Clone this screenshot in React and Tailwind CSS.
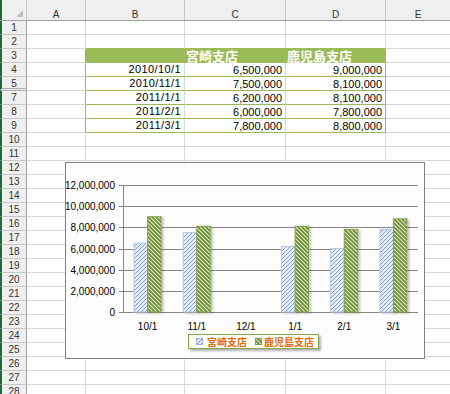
import React from 'react'

const rowNums = [1, 2, 3, 4, 5, 7, 8, 9, 10, 11, 12, 13, 14, 15, 16, 17, 18, 19, 20, 21, 22, 23, 24, 25, 26, 27, 28]

const table = {
  3: ['', '宮崎支店', '鹿児島支店'],
  4: ['2010/10/1', '6,500,000', '9,000,000'],
  5: ['2010/11/1', '7,500,000', '8,100,000'],
  7: ['2011/1/1', '6,200,000', '8,100,000'],
  8: ['2011/2/1', '6,000,000', '7,800,000'],
  9: ['2011/3/1', '7,800,000', '8,800,000'],
}

const cats = ['10/1', '11/1', '12/1', '1/1', '2/1', '3/1']
const miyazaki = [6.5, 7.5, null, 6.2, 6.0, 7.8]
const kagoshima = [9.0, 8.1, null, 8.1, 7.8, 8.8]

const jp = "'Noto Sans CJK JP', sans-serif"

function Chart() {
  const x0 = 57
  const catW = 295 / 6
  const y0 = 149
  const unit = 127 / 12
  const barW = 13.5
  const ticks = [0, 2, 4, 6, 8, 10, 12]

  return (
    <div className="absolute left-[65px] top-[162px] w-[360px] h-[197px] border border-[#7f7f7f] bg-[#fdfdfd]">
      <svg width="358" height="195" className="block" fontFamily="'Liberation Sans', Arial, sans-serif">
        <defs>
          <pattern id="pb" width="4" height="4" patternUnits="userSpaceOnUse">
            <rect width="4" height="4" fill="#e8effa" />
            <path d="M-1,1 l2,-2 M0,4 l4,-4 M3,5 l2,-2" stroke="#6f9bd8" strokeWidth="1" />
          </pattern>
          <pattern id="pg" width="4" height="4" patternUnits="userSpaceOnUse">
            <rect width="4" height="4" fill="#e3ecce" />
            <path d="M-1,3 l2,2 M0,0 l4,4 M3,-1 l2,2" stroke="#6a8a2e" strokeWidth="1.6" />
          </pattern>
          <filter id="sh" x="-30%" y="-10%" width="160%" height="130%">
            <feDropShadow dx="2" dy="1" stdDeviation="1" floodColor="#000" floodOpacity="0.22" />
          </filter>
          <filter id="lsh" x="-10%" y="-30%" width="120%" height="190%">
            <feDropShadow dx="2" dy="2" stdDeviation="1.2" floodColor="#000" floodOpacity="0.3" />
          </filter>
        </defs>

        {ticks.map((t) => {
          const y = Math.round(y0 - t * unit)
          return (
            <g key={t}>
              <line x1="53" x2="352" y1={y + 0.5} y2={y + 0.5} stroke="#868686" strokeWidth="1" />
              <text x="49" y={y + 4} fontSize="10" textAnchor="end" fill="#000">
                {t === 0 ? '0' : `${t},000,000`}
              </text>
            </g>
          )
        })}
        <line x1={x0 + 0.5} x2={x0 + 0.5} y1="22" y2={y0 + 1} stroke="#868686" strokeWidth="1" />

        {cats.map((c, i) => {
          const cx = x0 + catW * (i + 0.5)
          return (
            <g key={c}>
              {miyazaki[i] != null && (
                <rect x={cx - barW} y={y0 - miyazaki[i] * unit} width={barW} height={miyazaki[i] * unit} fill="url(#pb)" stroke="#b3c9e8" strokeWidth="1" filter="url(#sh)" />
              )}
              {kagoshima[i] != null && (
                <rect x={cx} y={y0 - kagoshima[i] * unit} width={barW} height={kagoshima[i] * unit} fill="url(#pg)" stroke="#86a44a" strokeWidth="1" filter="url(#sh)" />
              )}
              <text x={cx} y="167" fontSize="10" textAnchor="middle" fill="#000">{c}</text>
            </g>
          )
        })}

        <rect x="122.5" y="171.5" width="130" height="14" fill="#fafcf5" stroke="#86a44a" strokeWidth="1" filter="url(#lsh)" />
        <rect x="130.5" y="175.5" width="6" height="6" fill="url(#pb)" stroke="#9fb8de" strokeWidth="1" />
        <text x="141" y="182.5" fontSize="10" fontWeight="bold" fill="#e46c0a" fontFamily={jp}>宮崎支店</text>
        <rect x="189.5" y="175.5" width="6" height="6" fill="url(#pg)" stroke="#7d9a42" strokeWidth="1" />
        <text x="198" y="182.5" fontSize="10" fontWeight="bold" fill="#e46c0a" fontFamily={jp}>鹿児島支店</text>
      </svg>
    </div>
  )
}

export default function App() {
  return (
    <div className="relative w-[450px] h-[394px] overflow-hidden bg-white font-['Liberation_Sans',Arial,sans-serif] text-black">
      {/* column headers */}
      <div className="flex h-[21px] bg-[#efefef] border-b border-[#9e9e9e] text-[10px] text-[#333]">
        <div className="relative w-[27px] border-l-2 border-l-[#1e6b3d] border-r border-r-[#c6c6c6]">
          <div className="absolute right-[3px] bottom-[3px] w-0 h-0 border-l-[7px] border-l-transparent border-b-[7px] border-b-[#c0c0c0]" />
        </div>
        <div className="w-[59px] border-r border-[#c6c6c6] pt-[7px] text-center">A</div>
        <div className="w-[99px] border-r border-[#c6c6c6] pt-[7px] text-center">B</div>
        <div className="w-[101px] border-r border-[#c6c6c6] pt-[7px] text-center">C</div>
        <div className="w-[100px] border-r border-[#c6c6c6] pt-[7px] text-center">D</div>
        <div className="flex-1 pt-[7px] text-center">E</div>
      </div>

      {rowNums.map((n) => {
        const inTable = n >= 3 && n <= 9
        const isHead = n === 3
        const d = table[n]
        const lineB = n >= 2 && n <= 9 ? 'border-b-[#9bbb59]' : 'border-b-[#d9d9d9]'
        const vert = isHead ? 'border-r-[#9bbb59]' : 'border-r-[#d9d9d9]'
        return (
          <div key={n} className="flex h-[14px]">
            <div className={`w-[27px] bg-[#efefef] border-l-2 border-l-[#1e6b3d] border-r border-r-[#9e9e9e] text-[10px] leading-[13px] text-center text-[#333] ${n === 5 ? 'border-b-[3px] border-double border-b-[#aaaaaa]' : 'border-b border-b-[#c6c6c6]'}`}>
              {n}
            </div>
            <div className={`w-[59px] border-b border-b-[#d9d9d9] border-r ${inTable ? 'border-r-[#9bbb59]' : 'border-r-[#d9d9d9]'}`} />
            <div className={`w-[99px] border-b border-r ${lineB} ${vert} ${isHead ? 'bg-[#9bbb59]' : ''} pr-[3px] text-right text-[11px] leading-[13px] tracking-[0.4px]`}>
              {d && !isHead ? d[0] : ''}
            </div>
            <div className={`w-[101px] border-b border-r ${lineB} ${vert} ${isHead ? 'bg-[#9bbb59] text-white font-bold text-[13px] pl-[1px] text-left' : 'text-[11px] text-right pr-[3px]'} leading-[13px] font-['Noto_Sans_CJK_JP',sans-serif] whitespace-nowrap`}>
              {isHead ? d[1] : <span className="font-['Liberation_Sans',Arial,sans-serif]">{d ? d[1] : ''}</span>}
            </div>
            <div className={`w-[100px] border-b border-r ${lineB} ${inTable ? 'border-r-[#9bbb59]' : 'border-r-[#d9d9d9]'} ${isHead ? 'bg-[#9bbb59] text-white font-bold text-[13px] pl-[1px] text-left' : 'text-[11px] text-right pr-[3px]'} leading-[13px] font-['Noto_Sans_CJK_JP',sans-serif] whitespace-nowrap`}>
              {isHead ? d[2] : <span className="font-['Liberation_Sans',Arial,sans-serif]">{d ? d[2] : ''}</span>}
            </div>
            <div className="flex-1 border-b border-b-[#d9d9d9]" />
          </div>
        )
      })}

      <Chart />
    </div>
  )
}
